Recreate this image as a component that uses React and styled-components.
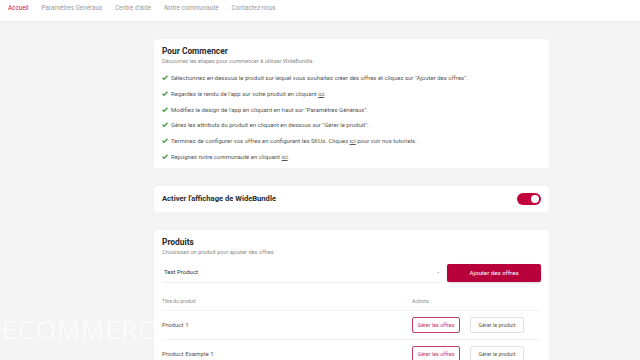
import styled, { createGlobalStyle } from "styled-components";

const Global = createGlobalStyle`
  html, body { margin: 0; padding: 0; }
  body {
    background: #f4f4f4;
    font-family: Roboto, "Liberation Sans", sans-serif;
    color: #303030;
    overflow: hidden;
  }
`;

const Page = styled.div`
  position: relative;
  width: 640px;
  height: 360px;
  overflow: hidden;
`;

const Nav = styled.nav`
  height: 22px;
  background: #fff;
  display: flex;
  align-items: center;
  gap: 13px;
  padding: 0 8px;
  box-sizing: border-box;
  border-bottom: 1px solid #ececec;
`;

const NavItem = styled.span`
  font-size: 6.3px;
  color: ${(p) => (p.$active ? "#c4123f" : "#9a9a9a")};
  margin-top: -6px;
`;

const Watermark = styled.div`
  position: absolute;
  left: 2px;
  top: 311px;
  font-family: "Open Sans", sans-serif;
  font-weight: 300;
  font-size: 26px;
  letter-spacing: 1.6px;
  color: #ffffff;
  z-index: 0;
`;

const Main = styled.main`
  position: relative;
  z-index: 1;
  margin-left: 154px;
  width: 395px;
  padding-top: 17px;
  display: flex;
  flex-direction: column;
  gap: 18px;
`;

const Card = styled.section`
  background: #fff;
  border-radius: 3px;
  box-shadow: 0 0 1px rgba(0, 0, 0, 0.08);
  padding: ${(p) => p.$pad || "8px"};
  box-sizing: border-box;
`;

const Title = styled.h2`
  margin: 0;
  font-size: ${(p) => p.$size || "8.4px"};
  font-weight: 700;
  color: #2a2a2a;
  line-height: 11px;
`;

const Sub = styled.p`
  margin: 0;
  font-size: 5.6px;
  color: #8a8a8a;
  line-height: 8px;
`;

const Steps = styled.ul`
  list-style: none;
  margin: 8px 0 0;
  padding: 0;
  display: flex;
  flex-direction: column;
  gap: 6.8px;
`;

const Step = styled.li`
  display: flex;
  align-items: center;
  gap: 3px;
  font-size: 6px;
  color: #555;
  line-height: 9px;
`;

const Link = styled.span`
  text-decoration: underline;
`;

const Check = () => (
  <svg width="6" height="5" viewBox="0 0 12 10">
    <path d="M1 5.5 L4.2 8.5 L11 1.5" fill="none" stroke="#3f9c3f" strokeWidth="2.6" />
  </svg>
);

const Row = styled.div`
  display: flex;
  align-items: center;
  justify-content: space-between;
  height: 26px;
`;

const Toggle = styled.div`
  width: 24px;
  height: 12px;
  border-radius: 6px;
  background: #c4003c;
  position: relative;
  &::after {
    content: "";
    position: absolute;
    right: 2px;
    top: 2px;
    width: 8px;
    height: 8px;
    border-radius: 50%;
    background: #fff;
  }
`;

const PickRow = styled.div`
  display: flex;
  align-items: center;
  gap: 5px;
  margin-top: 5px;
`;

const Select = styled.div`
  flex: 1;
  height: 21px;
  display: flex;
  align-items: center;
  justify-content: space-between;
  padding: 0 2px;
  font-size: 6px;
  color: #333;
  border-bottom: 1px solid #f0f0f0;
`;

const Chevron = styled.span`
  font-size: 5px;
  color: #666;
`;

const AddButton = styled.button`
  width: 94px;
  height: 18px;
  margin-top: 3px;
  background: #b8003c;
  border: none;
  border-radius: 2px;
  color: #fff;
  font-family: Roboto, sans-serif;
  font-size: 6.2px;
  box-shadow: 0 1px 2px rgba(0, 0, 0, 0.15);
`;

const Table = styled.div`
  margin-top: 9px;
`;

const THead = styled.div`
  display: grid;
  grid-template-columns: 250px 1fr;
  font-size: 5px;
  color: #8c8c8c;
  height: 18px;
  align-items: center;
  border-bottom: 1px solid #f2f2f2;
`;

const TRow = styled.div`
  display: grid;
  grid-template-columns: 250px 1fr;
  align-items: center;
  height: 28px;
  border-bottom: 1px solid #f2f2f2;
  font-size: 6.2px;
  color: #555;
`;

const Actions = styled.div`
  display: flex;
  gap: 10px;
`;

const SmallBtn = styled.button`
  height: 16px;
  padding: 0;
  width: ${(p) => (p.$primary ? "48px" : "54px")};
  background: #fff;
  border: 1px solid ${(p) => (p.$primary ? "#c0406a" : "#e0e0e0")};
  border-radius: 2px;
  color: ${(p) => (p.$primary ? "#c0305e" : "#555")};
  font-family: Roboto, sans-serif;
  font-size: 5.4px;
`;

const steps = [
  <>Sélectionnez en-dessous le produit sur lequel vous souhaitez créer des offres et cliquez sur "Ajouter des offres".</>,
  <>Regardez le rendu de l'app sur votre produit en cliquant <Link>ici</Link>.</>,
  <>Modifiez le design de l'app en cliquant en haut sur "Paramètres Généraux".</>,
  <>Gérez les attributs du produit en cliquant en dessous sur "Gérer le produit".</>,
  <>Terminez de configurer vos offres en configurant les SKUs. Cliquez <Link>ici</Link> pour voir nos tutoriels.</>,
  <>Rejoignez notre communauté en cliquant <Link>ici</Link>.</>,
];

const products = ["Product 1", "Product Example 1"];

export default function App() {
  return (
    <Page>
      <Global />
      <Nav>
        <NavItem $active>Accueil</NavItem>
        <NavItem>Paramètres Généraux</NavItem>
        <NavItem>Centre d'aide</NavItem>
        <NavItem>Notre communauté</NavItem>
        <NavItem>Contactez-nous</NavItem>
      </Nav>
      <Watermark>ECOMMERC</Watermark>
      <Main>
        <Card $pad="7px 8px 7px">
          <Title>Pour Commencer</Title>
          <Sub>Découvrez les étapes pour commencer à utiliser WideBundle</Sub>
          <Steps>
            {steps.map((s, i) => (
              <Step key={i}>
                <Check />
                <span>{s}</span>
              </Step>
            ))}
          </Steps>
        </Card>
        <Card $pad="0 8px">
          <Row>
            <Title $size="7.6px">Activer l'affichage de WideBundle</Title>
            <Toggle />
          </Row>
        </Card>
        <Card $pad="7px 8px 0">
          <Title>Produits</Title>
          <Sub>Choisissez un produit pour ajouter des offres</Sub>
          <PickRow>
            <Select>
              <span>Test Product</span>
              <Chevron>⌄</Chevron>
            </Select>
            <AddButton>Ajouter des offres</AddButton>
          </PickRow>
          <Table>
            <THead>
              <span>Titre du produit</span>
              <span>Actions</span>
            </THead>
            {products.map((p) => (
              <TRow key={p}>
                <span>{p}</span>
                <Actions>
                  <SmallBtn $primary>Gérer les offres</SmallBtn>
                  <SmallBtn>Gérer le produit</SmallBtn>
                </Actions>
              </TRow>
            ))}
          </Table>
        </Card>
      </Main>
    </Page>
  );
}
